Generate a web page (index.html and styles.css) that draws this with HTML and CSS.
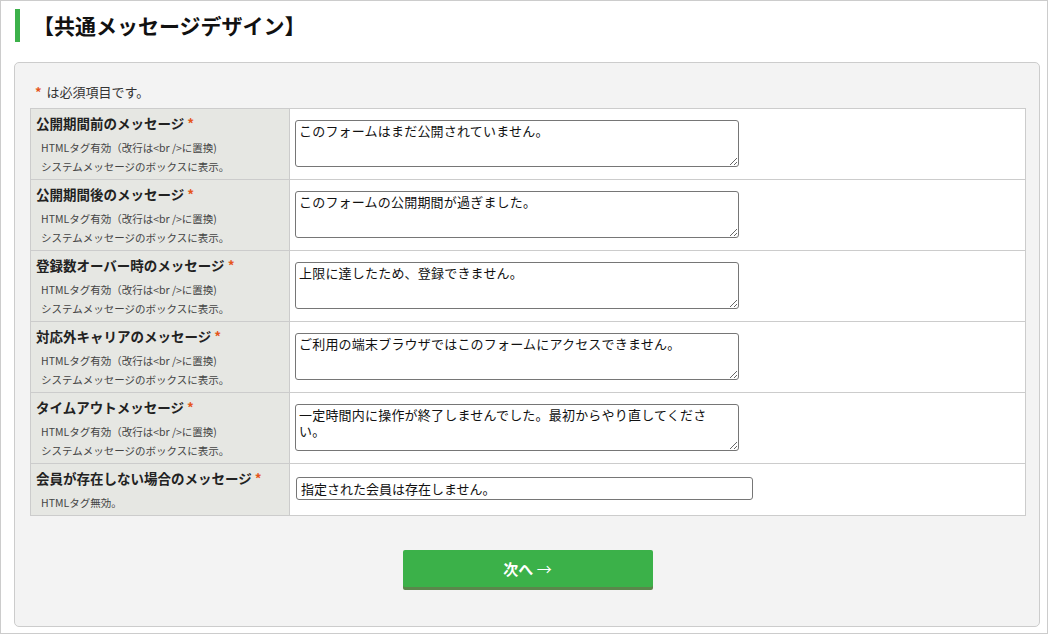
FILE: index.html
```html
<!DOCTYPE html>
<html lang="ja">
<head>
    <meta charset="UTF-8">
    <title>共通メッセージデザイン</title>
    <link rel="stylesheet" href="styles.css">
</head>
<body>
<div class="frame">
    <h1 class="page-title">【共通メッセージデザイン】</h1>

    <div class="panel">
        <p class="note"><span class="req">*</span> は必須項目です。</p>

        <table class="form-table">
            <tr>
                <th>
                    <div class="label">公開期間前のメッセージ <span class="req">*</span></div>
                    <div class="hint">HTMLタグ有効（改行は&lt;br /&gt;に置換)</div>
                    <div class="hint">システムメッセージのボックスに表示。</div>
                </th>
                <td><textarea class="msg-area">このフォームはまだ公開されていません。</textarea></td>
            </tr>
            <tr>
                <th>
                    <div class="label">公開期間後のメッセージ <span class="req">*</span></div>
                    <div class="hint">HTMLタグ有効（改行は&lt;br /&gt;に置換)</div>
                    <div class="hint">システムメッセージのボックスに表示。</div>
                </th>
                <td><textarea class="msg-area">このフォームの公開期間が過ぎました。</textarea></td>
            </tr>
            <tr>
                <th>
                    <div class="label">登録数オーバー時のメッセージ <span class="req">*</span></div>
                    <div class="hint">HTMLタグ有効（改行は&lt;br /&gt;に置換)</div>
                    <div class="hint">システムメッセージのボックスに表示。</div>
                </th>
                <td><textarea class="msg-area">上限に達したため、登録できません。</textarea></td>
            </tr>
            <tr>
                <th>
                    <div class="label">対応外キャリアのメッセージ <span class="req">*</span></div>
                    <div class="hint">HTMLタグ有効（改行は&lt;br /&gt;に置換)</div>
                    <div class="hint">システムメッセージのボックスに表示。</div>
                </th>
                <td><textarea class="msg-area">ご利用の端末ブラウザではこのフォームにアクセスできません。</textarea></td>
            </tr>
            <tr>
                <th>
                    <div class="label">タイムアウトメッセージ <span class="req">*</span></div>
                    <div class="hint">HTMLタグ有効（改行は&lt;br /&gt;に置換)</div>
                    <div class="hint">システムメッセージのボックスに表示。</div>
                </th>
                <td><textarea class="msg-area">一定時間内に操作が終了しませんでした。最初からやり直してください。</textarea></td>
            </tr>
            <tr>
                <th>
                    <div class="label">会員が存在しない場合のメッセージ <span class="req">*</span></div>
                    <div class="hint">HTMLタグ無効。</div>
                </th>
                <td><input type="text" class="msg-input" value="指定された会員は存在しません。"></td>
            </tr>
        </table>

        <div class="actions">
            <button type="button" class="btn-next">次へ <span class="arrow">→</span></button>
        </div>
    </div>
</div>
</body>
</html>
```

FILE: styles.css
```css
* {
    box-sizing: border-box;
}

body {
    margin: 0;
    padding: 0;
    background-color: #fff;
    font-family: "Noto Sans CJK JP", "Noto Sans", sans-serif;
    color: #222;
}

.frame {
    width: 1048px;
    height: 634px;
    border: 1px solid #ccc;
    padding-top: 8px;
    overflow: hidden;
}

.page-title {
    margin: 0 0 20px 14px;
    padding-left: 13px;
    border-left: 5px solid #3cb14a;
    height: 33px;
    line-height: 33px;
    font-size: 21px;
    font-weight: bold;
    color: #111;
}

.panel {
    margin-left: 13px;
    width: 1026px;
    height: 565px;
    background-color: #f3f3f3;
    border: 1px solid #ccc;
    border-radius: 5px;
    padding: 20px 14px 0 15px;
}

.note {
    margin: 0 0 7px 5px;
    font-size: 13px;
    line-height: 18px;
    color: #333;
}

.note .req {
    margin-right: 2px;
}

.req {
    color: #e5561b;
    font-weight: bold;
}

.form-table {
    width: 996px;
    border-collapse: collapse;
    background-color: #fff;
}

.form-table th,
.form-table td {
    border: 1px solid #ccc;
}

.form-table th {
    width: 259px;
    background-color: #e6e7e3;
    text-align: left;
    font-weight: normal;
    vertical-align: top;
    padding: 5px 5px 3px 5px;
}

.form-table td {
    padding: 0 0 1px 5px;
    vertical-align: middle;
}

.label {
    font-size: 13.5px;
    line-height: 18px;
    font-weight: bold;
    color: #222;
}

.hint {
    font-size: 10.5px;
    line-height: 19px;
    padding-left: 5px;
    color: #444;
}

.label + .hint {
    margin-top: 6px;
}

.msg-area {
    display: block;
    width: 444px;
    height: 47px;
    margin: 0;
    padding: 2px 20px 2px 3px;
    border: 1px solid #767676;
    border-radius: 3px;
    font-family: "Noto Sans CJK JP", sans-serif;
    font-size: 13px;
    line-height: 16px;
    letter-spacing: 0.2px;
    color: #111;
}

.msg-input {
    display: block;
    width: 457px;
    height: 23px;
    margin: 0 0 1px 1px;
    padding: 1px 4px;
    border: 1px solid #767676;
    border-radius: 3px;
    font-family: "Noto Sans CJK JP", sans-serif;
    font-size: 13px;
    color: #111;
}

.actions {
    display: flex;
    justify-content: center;
    padding-top: 34px;
}

.btn-next {
    width: 250px;
    height: 37px;
    border: none;
    border-radius: 2px;
    background-color: #3bb149;
    box-shadow: 0 3px 0 #5a874b;
    color: #fff;
    font-family: "Noto Sans CJK JP", sans-serif;
    font-size: 15px;
    font-weight: bold;
    cursor: pointer;
}

.btn-next .arrow {
    font-weight: normal;
}
```
